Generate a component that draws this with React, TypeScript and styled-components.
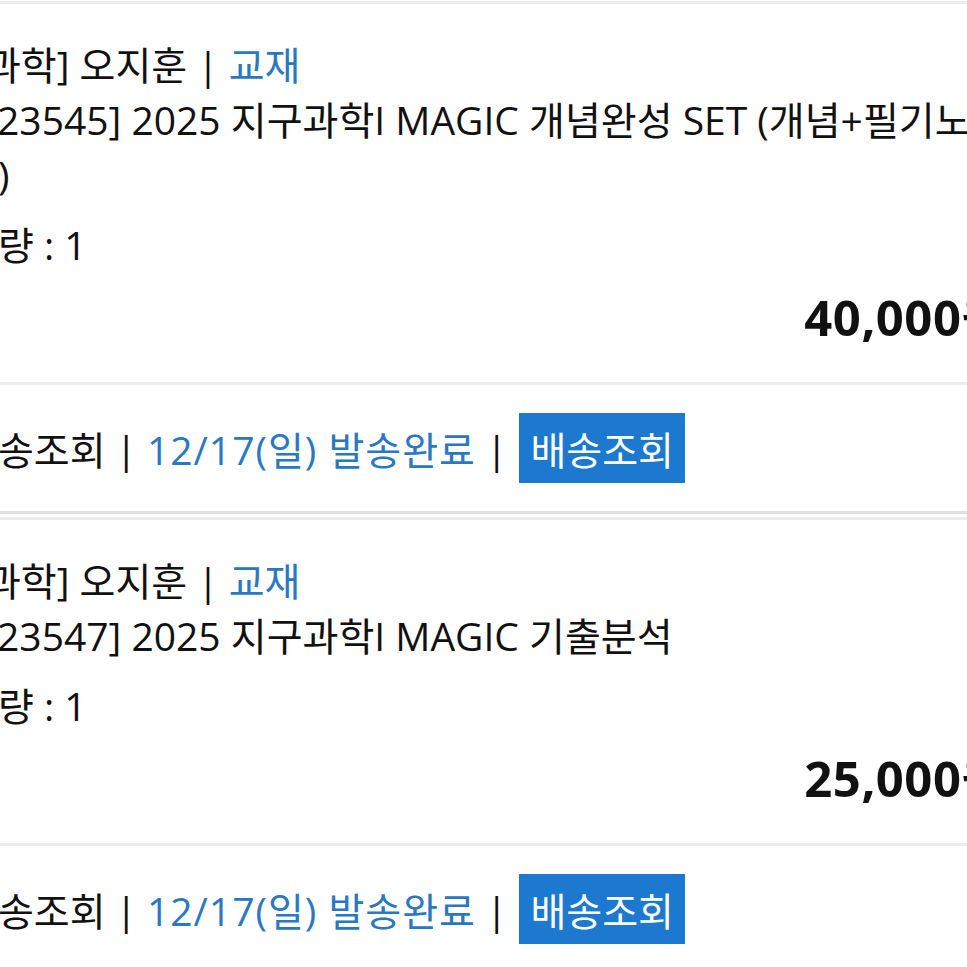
import React from "react";
import styled, { createGlobalStyle } from "styled-components";

interface IOrderItem {
  meta: string;
  category: string;
  nameLines: string[];
  qty: number;
  price: string;
  shipDate: string;
}

const items: IOrderItem[] = [
  {
    meta: "[ 과학] 오지훈",
    category: "교재",
    nameLines: ["[123545] 2025 지구과학I MAGIC 개념완성 SET (개념+필기노", "트)"],
    qty: 1,
    price: "40,000",
    shipDate: "12/17(일) 발송완료",
  },
  {
    meta: "[ 과학] 오지훈",
    category: "교재",
    nameLines: ["[123547] 2025 지구과학I MAGIC 기출분석"],
    qty: 1,
    price: "25,000",
    shipDate: "12/17(일) 발송완료",
  },
];

const GlobalStyle = createGlobalStyle`
  html, body {
    margin: 0;
    padding: 0;
    background: #fff;
  }
  body {
    font-family: "Open Sans", "Noto Sans CJK KR", sans-serif;
    color: #111;
  }
`;

const Page = styled.div`
  width: 967px;
  height: 967px;
  overflow: hidden;
  padding-top: 1px;
  box-sizing: border-box;
`;

const Shift = styled.div`
  margin-left: -38px;
  width: 1045px;
`;

const Item = styled.div`
  border-top: 3px solid #ebebeb;
  border-bottom: 3px solid #e0e0e0;
  margin-bottom: 3px;
`;

const Info = styled.div`
  padding: 33px 0 37px;
`;

const Line = styled.div`
  font-size: 39px;
  line-height: 55px;
  white-space: nowrap;
`;

const Qty = styled(Line)`
  margin-top: 15px;
`;

const Price = styled.div`
  margin-top: 18px;
  font-size: 49px;
  font-weight: 700;
  line-height: 55px;
  letter-spacing: 0.5px;
  text-align: right;
  white-space: nowrap;
`;

const Blue = styled.span`
  color: #2a78c2;
`;

const ShipDate = styled(Blue)`
  letter-spacing: 1px;
`;

const Sep = styled.span`
  margin: 0 10px;
  color: #111;
`;

const Delivery = styled.div`
  display: flex;
  align-items: center;
  height: 126px;
  border-top: 3px solid #ececec;
  font-size: 39px;
  white-space: nowrap;
`;

const TrackButton = styled.span`
  display: inline-flex;
  align-items: center;
  height: 70px;
  padding: 0 11px;
  margin-left: 2px;
  background: #1d79cf;
  color: #fff;
`;

const OrderItem: React.FC<{ item: IOrderItem }> = ({ item }) => (
  <Item>
    <Info>
      <Line>
        {item.meta}
        <Sep>|</Sep>
        <Blue>{item.category}</Blue>
      </Line>
      {item.nameLines.map((l) => (
        <Line key={l}>{l}</Line>
      ))}
      <Qty>수량 : {item.qty}</Qty>
      <Price>{item.price}원</Price>
    </Info>
    <Delivery>
      배송조회
      <Sep>|</Sep>
      <ShipDate>{item.shipDate}</ShipDate>
      <Sep>|</Sep>
      <TrackButton>배송조회</TrackButton>
    </Delivery>
  </Item>
);

export default function App() {
  return (
    <Page>
      <GlobalStyle />
      <Shift>
        {items.map((it) => (
          <OrderItem key={it.price} item={it} />
        ))}
      </Shift>
    </Page>
  );
}
